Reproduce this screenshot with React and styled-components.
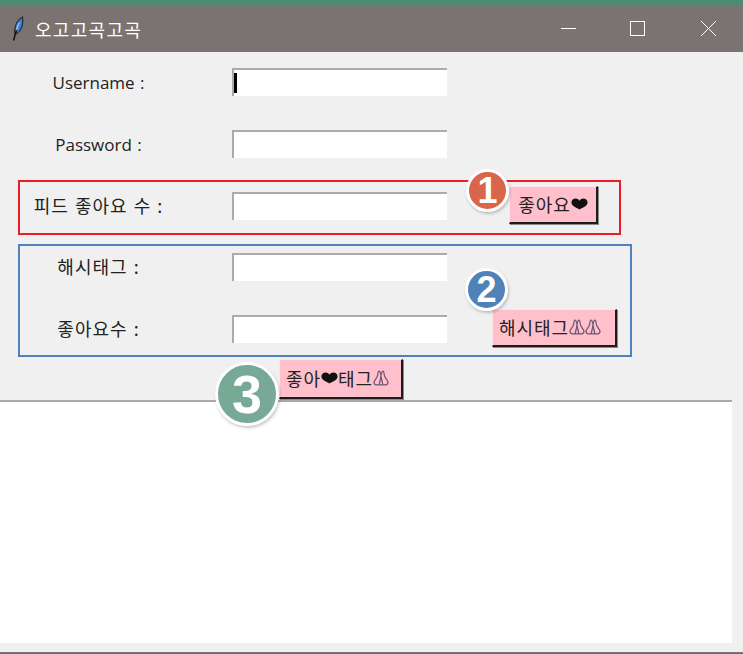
import React from "react";
import styled, { createGlobalStyle } from "styled-components";

const GlobalStyle = createGlobalStyle`
  html, body {
    margin: 0;
    padding: 0;
    background: #f0f0f0;
  }
`;

const Screen = styled.div`
  position: relative;
  width: 743px;
  height: 654px;
  overflow: hidden;
  display: flex;
  flex-direction: column;
  background: #f0f0f0;
  color: #222;
  font-family: "Noto Sans", "Noto Sans CJK KR", sans-serif;
`;

const DesktopStrip = styled.div`
  height: 5px;
  flex: none;
  background: #4b8c73;
`;

const TitleBar = styled.div`
  height: 47px;
  flex: none;
  display: flex;
  align-items: center;
  background: #7b7371;
  color: #fff;
`;

const AppIcon = styled.svg`
  width: 16px;
  height: 26px;
  margin-left: 9px;
  flex: none;
`;

const Title = styled.div`
  margin-left: 10px;
  flex: 1;
  font-family: "Noto Sans CJK KR", sans-serif;
  font-size: 18px;
  letter-spacing: 1.3px;
  font-weight: 400;
`;

const WindowButton = styled.div`
  width: 70px;
  height: 100%;
  display: flex;
  align-items: center;
  justify-content: center;

  svg {
    margin-right: ${(p) => p.$nudge || 0}px;
  }
`;

const Form = styled.div`
  display: grid;
  grid-template-columns: 232px 215px 1fr;
  grid-template-rows: 62px 62px 61px 62px 28px;
  align-items: start;
  padding-top: 16px;
  flex: none;
`;

const FieldLabel = styled.div`
  width: 197px;
  height: 28px;
  text-align: center;
  white-space: pre;
  line-height: ${(p) => (p.$latin ? "30px" : "26px")};
  font-size: ${(p) => (p.$latin ? "17px" : "18px")};
  letter-spacing: ${(p) => (p.$latin ? "0" : "1px")};
  word-spacing: 1px;
  font-family: ${(p) =>
    p.$latin ? '"Open Sans", sans-serif' : '"Noto Sans CJK KR", sans-serif'};
`;

const Entry = styled.input`
  box-sizing: border-box;
  display: block;
  width: 215px;
  height: 28px;
  padding: 0;
  outline: none;
  background-color: #fff;
  border-style: solid;
  border-width: 2px 0 0 2px;
  border-color: #ababab;
  background-image: ${(p) =>
    p.$caret ? "linear-gradient(#000, #000)" : "none"};
  background-repeat: no-repeat;
  background-position: 0 3px;
  background-size: 3px 20px;
`;

const PinkButton = styled.div`
  box-sizing: border-box;
  display: flex;
  align-items: center;
  justify-content: center;
  width: ${(p) => p.$width}px;
  height: ${(p) => p.$height || 38}px;
  margin-left: ${(p) => p.$offset}px;
  margin-top: ${(p) => p.$raise || 0}px;
  padding: 0 ${(p) => p.$shift || 0}px 2px 0;
  background: #ffc0cb;
  border-style: solid;
  border-color: #fde4e8 #1c1c1c #1c1c1c #fde4e8;
  border-width: 1px 2px 2px 1px;
  box-shadow: 1px 1px 0 #8a8a8a;
  font-family: "Noto Sans CJK KR", sans-serif;
  font-size: 18px;
  letter-spacing: 0.9px;
  line-height: 24px;
  white-space: nowrap;
  color: #222;

  svg {
    flex: none;
  }
`;

const ButtonRow = styled.div`
  flex: none;
  margin-top: 16px;
`;

const TextArea = styled.div`
  flex: 1;
  margin: 1px 11px 9px 0;
  background: #fff;
  border-top: 2px solid #a9a9a9;
`;

const TaskbarEdge = styled.div`
  height: 2px;
  flex: none;
  background: #4b7d6b;
  border-top: 1px solid #777;
  box-sizing: border-box;
`;

const Callout = styled.div`
  position: absolute;
  left: 18px;
  box-sizing: border-box;
  top: ${(p) => p.$top}px;
  width: ${(p) => p.$width}px;
  height: ${(p) => p.$height}px;
  border: 2px solid ${(p) => p.$color};
  pointer-events: none;
`;

const Badge = styled.div`
  position: absolute;
  box-sizing: border-box;
  left: ${(p) => p.$x}px;
  top: ${(p) => p.$y}px;
  width: ${(p) => p.$size}px;
  height: ${(p) => p.$size}px;
  border-radius: 50%;
  display: flex;
  align-items: center;
  justify-content: center;
  background: ${(p) => p.$color};
  border: 3px solid #fff;
  box-shadow: 1px 2px 3px rgba(0, 0, 0, 0.22);
  color: #fff;
  font-family: "Liberation Sans", Arial, sans-serif;
  font-weight: 700;
  font-size: ${(p) => Math.round(p.$size * 0.84)}px;
  line-height: 1;
`;

const Heart = () => (
  <svg width="17" height="12" viewBox="0 0 17 12">
    <path
      d="M8.500 11.600C6 9.700.4 8.400.4 4.600.4 2 2.600.6 4.600.6c1.700 0 3 .9 3.900 2.100C9.400 1.500 10.700.6 12.400.6c2 0 4.200 1.400 4.200 4 0 3.800-5.600 5.100-8.100 7z"
      fill="#111"
    />
  </svg>
);

const Hands = () => (
  <svg width="16" height="16" viewBox="0 0 16 16">
    <path
      d="M8 5.500C7.500 2.800 6.900 1.200 6 1.200 5 1.200 5 3.200 4.700 5.200 4.200 8.500 1 10 1 12.600 1 14 2 14.800 3.500 14.800h9c1.500 0 2.500-.8 2.500-2.200 0-2.600-3.200-4.100-3.700-7.400C11 3.200 11 1.200 10 1.200 9.100 1.200 8.500 2.800 8 5.500zM8 5.500c-.2 3.500-1.300 6-1.800 9.300M8 5.500c.2 3.500 1.300 6 1.800 9.300"
      fill="none"
      stroke="#6a5575"
      strokeWidth="1.200"
    />
  </svg>
);

export default function App() {
  return (
    <>
      <GlobalStyle />
      <Screen>
        <DesktopStrip />
        <TitleBar>
          <AppIcon viewBox="0 0 16 26">
            <path d="M13.500 1C9 3.500 5.500 9.500 5.500 17l2.500.5c4-2.500 7-9.500 5.500-16.500z" fill="#3f7fd6" stroke="#22303f" strokeWidth="1.200" />
            <path d="M10.500 6.500C8.500 10 7.500 13 7 16" stroke="#a9c8ee" strokeWidth="1.200" fill="none" />
            <path d="M7.500 14 4.500 24.500" stroke="#10151c" strokeWidth="1.600" fill="none" />
          </AppIcon>
          <Title>오고고곡고곡</Title>
          <WindowButton>
            <svg width="15" height="15" viewBox="0 0 15 15">
              <path d="M0 7.500h15" stroke="#fff" strokeWidth="1" />
            </svg>
          </WindowButton>
          <WindowButton $nudge={2}>
            <svg width="15" height="15" viewBox="0 0 15 15">
              <rect x=".5" y=".5" width="14" height="14" fill="none" stroke="#fff" strokeWidth="1" />
            </svg>
          </WindowButton>
          <WindowButton>
            <svg width="15" height="15" viewBox="0 0 15 15">
              <path d="M0 0l15 15M15 0 0 15" stroke="#fff" strokeWidth="1" />
            </svg>
          </WindowButton>
        </TitleBar>

        <Form>
          <FieldLabel $latin>Username :</FieldLabel>
          <Entry readOnly $caret />
          <span />

          <FieldLabel $latin>Password :</FieldLabel>
          <Entry readOnly />
          <span />

          <FieldLabel>피드 좋아요 수 :</FieldLabel>
          <Entry readOnly />
          <PinkButton $width={89} $offset={62} $raise={-6}>
            좋아요
            <Heart />
          </PinkButton>

          <FieldLabel>해시태그 :</FieldLabel>
          <Entry readOnly />
          <span />

          <FieldLabel>좋아요수 :</FieldLabel>
          <Entry readOnly />
          <PinkButton $width={125} $offset={45} $raise={-6} $shift={8}>
            해시태그
            <Hands />
            <Hands />
          </PinkButton>
        </Form>

        <ButtonRow>
          <PinkButton $width={124} $height={40} $offset={279} $shift={6}>
            좋아
            <Heart />
            태그
            <Hands />
          </PinkButton>
        </ButtonRow>

        <TextArea />
        <TaskbarEdge />

        <Callout $top={180} $width={603} $height={55} $color="#ed1c24" />
        <Callout $top={244} $width={614} $height={113} $color="#4f81bd" />
        <Badge $x={466} $y={169} $size={43} $color="#d9654a">1</Badge>
        <Badge $x={465} $y={268} $size={43} $color="#4f82b8">2</Badge>
        <Badge $x={215} $y={362} $size={64} $color="#78a896">3</Badge>
      </Screen>
    </>
  );
}
